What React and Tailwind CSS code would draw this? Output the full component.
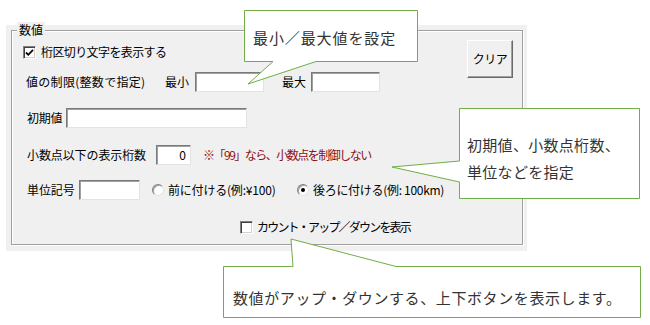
import React from 'react'

function Check({ checked }) {
  return (
    <span className="w-[13px] h-[13px] bg-white border border-t-[#808080] border-l-[#808080] border-b-white border-r-white shadow-[inset_1px_1px_0_#404040,inset_-1px_-1px_0_#d4d0c8] flex items-center justify-center shrink-0">
      {checked && (
        <svg width="9" height="9" viewBox="0 0 9 9">
          <path d="M1 4.5 L3.3 6.8 L8 1.8" fill="none" stroke="#000" strokeWidth="1.8" />
        </svg>
      )}
    </span>
  )
}

function Radio({ checked }) {
  return (
    <span className="w-[12px] h-[12px] rounded-full bg-white border border-t-[#808080] border-l-[#808080] border-b-[#e3e3e3] border-r-[#e3e3e3] shadow-[inset_1px_1px_0_#a0a0a0] flex items-center justify-center shrink-0">
      {checked && <span className="w-[4px] h-[4px] rounded-full bg-black" />}
    </span>
  )
}

function Field({ w, value }) {
  return (
    <span className={`${w} h-[20px] bg-white border border-t-[#7a7a7a] border-l-[#7a7a7a] border-b-[#e3e3e3] border-r-[#e3e3e3] shadow-[inset_1px_1px_0_#a0a0a0] flex items-center justify-end pr-[4px] text-[12px]`}>
      {value}
    </span>
  )
}

export default function App() {
  return (
    <div className="relative w-[650px] h-[325px] bg-white overflow-hidden font-['Noto_Sans_CJK_JP',sans-serif] text-[12px] leading-[16px] text-black">
      <div className="ml-[6px] mt-[25px] w-[521px] h-[226px] bg-[#f0f0f0] pt-[5px] pl-[5px]">
        <div className="relative w-[512px] h-[215px] border border-[#a0a0a0] shadow-[1px_1px_0_#fff,inset_1px_1px_0_#fff]">
          <span className="absolute -top-[9px] left-[5px] px-[2px] bg-[#f0f0f0]">数値</span>

          <div className="flex justify-between pt-[9px] pr-[9px]">
            <div className="pt-[2px]">
              <div className="flex items-center h-[20px] pl-[11px]">
                <Check checked />
                <span className="ml-[5px] tracking-[-0.6px]">桁区切り文字を表示する</span>
              </div>
              <div className="flex items-center h-[20px] mt-[10px] pl-[14px]">
                <span className="w-[139px] tracking-[0.3px]">値の制限(整数で指定)</span>
                <span>最小</span>
                <span className="ml-[6px]"><Field w="w-[69px]" /></span>
                <span className="ml-[18px]">最大</span>
                <span className="ml-[5px]"><Field w="w-[69px]" /></span>
              </div>
            </div>
            <button className="w-[46px] h-[38px] bg-[#f0f0f0] border border-t-white border-l-white border-b-[#696969] border-r-[#696969] shadow-[inset_-1px_-1px_0_#a0a0a0] text-[12px] tracking-[-0.5px]">
              クリア
            </button>
          </div>

          <div className="flex items-center h-[20px] mt-[16px] pl-[15px]">
            <span className="tracking-[-0.2px]">初期値</span>
            <span className="ml-[4px]"><Field w="w-[181px]" /></span>
          </div>

          <div className="flex items-center h-[20px] mt-[17px] pl-[15px]">
            <span className="w-[120px] tracking-[-0.1px]">小数点以下の表示桁数</span>
            <span className="ml-[9px]"><Field w="w-[35px]" value="0" /></span>
            <span className="ml-[12px] text-[#8b1010] tracking-[-1.5px]">※「99」なら、小数点を制御しない</span>
          </div>

          <div className="flex items-center h-[20px] mt-[15px] pl-[15px]">
            <span className="w-[48px] tracking-[-0.1px]">単位記号</span>
            <span className="ml-[4px]"><Field w="w-[61px]" /></span>
            <span className="ml-[12px]"><Radio /></span>
            <span className="ml-[4px] w-[109px] tracking-[-0.2px]">前に付ける(例:¥100)</span>
            <span className="ml-[20px]"><Radio checked /></span>
            <span className="ml-[4px] tracking-[-0.3px]">後ろに付ける(例: 100km)</span>
          </div>

          <div className="flex items-center h-[20px] mt-[17px] pl-[228px]">
            <Check />
            <span className="ml-[4px] tracking-[-1.8px]">カウント・アップ／ダウンを表示</span>
          </div>
        </div>
      </div>

      {/* callouts */}
      <svg className="absolute inset-0 pointer-events-none" width="650" height="325" viewBox="0 0 650 325">
        <polygon
          points="244.5,10.5 417.5,10.5 417.5,61.5 316,61.5 248,84 273,61.5 244.5,61.5"
          fill="#fff"
          stroke="#70ad47"
          strokeWidth="1"
        />
        <polygon
          points="459.5,108.5 639.5,108.5 639.5,198.5 459.5,198.5 459.5,182 392,167 459.5,161"
          fill="#fff"
          stroke="#70ad47"
          strokeWidth="1"
        />
        <polygon
          points="223.5,266.5 293,266.5 291,239 396,266.5 640.5,266.5 640.5,317.5 223.5,317.5"
          fill="#fff"
          stroke="#70ad47"
          strokeWidth="1"
        />
      </svg>
      <div className="absolute left-[253px] top-[27px] text-[15px] leading-[22px] tracking-[0.9px] text-[#333]">
        最小／最大値を設定
      </div>
      <div className="absolute left-[467px] top-[131px] text-[15px] leading-[27px] tracking-[0.3px] text-[#333]">
        <div>初期値、小数点桁数、</div>
        <div>単位などを指定</div>
      </div>
      <div className="absolute left-[233px] top-[287px] text-[15px] leading-[22px] tracking-[0.6px] text-[#333]">
        数値がアップ・ダウンする、上下ボタンを表示します。
      </div>
    </div>
  )
}
